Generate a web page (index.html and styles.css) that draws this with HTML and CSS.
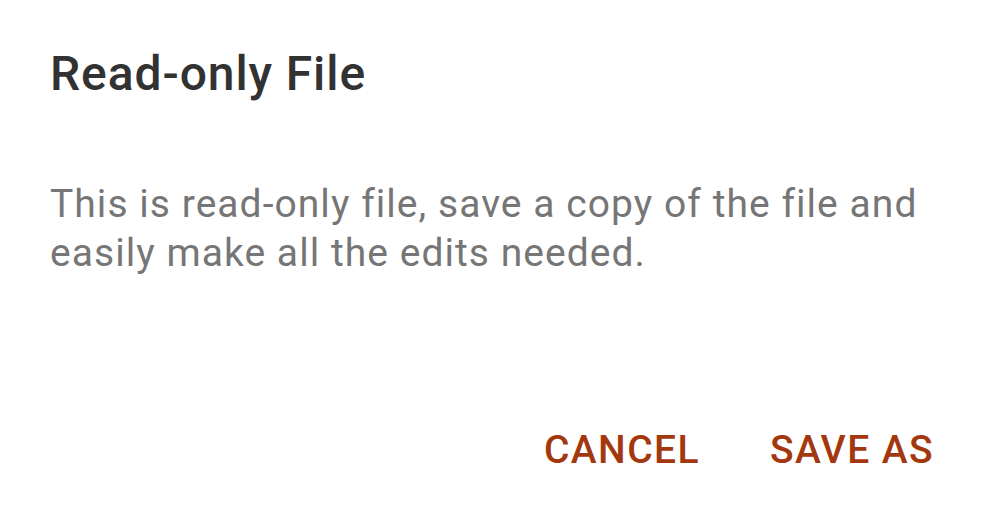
FILE: index.html
```html
<!DOCTYPE html>
<html lang="en">
<head>
    <meta charset="UTF-8">
    <meta name="viewport" content="width=device-width, initial-scale=1.0">
    <title>Read-only File</title>
    <link rel="stylesheet" href="styles.css">
</head>
<body>

    <div class="dialog">
        <h2 class="dialog-title">Read-only File</h2>
        <p class="dialog-text">This is read-only file, save a copy of the file and easily make all the edits needed.</p>
        <div class="dialog-actions">
            <button class="action">CANCEL</button>
            <button class="action">SAVE AS</button>
        </div>
    </div>

</body>
</html>
```

FILE: styles.css
```css
body {
    margin: 0;
    background: #ffffff;
    font-family: Roboto, "Noto Sans", sans-serif;
}
.dialog {
    width: 999px;
    height: 518px;
    box-sizing: border-box;
    padding: 46px 50px 0 50px;
    display: flex;
    flex-direction: column;
}
.dialog-title {
    margin: 0;
    font-size: 48px;
    font-weight: 500;
    line-height: 56px;
    letter-spacing: 0.9px;
    color: #323232;
}
.dialog-text {
    margin: 78px 0 0 0;
    font-size: 39px;
    line-height: 49px;
    letter-spacing: 1.05px;
    color: #767676;
}
.dialog-actions {
    display: flex;
    justify-content: flex-end;
    gap: 70px;
    margin-top: 148px;
    padding-right: 15px;
}
.action {
    background: none;
    border: none;
    padding: 0;
    font-family: inherit;
    font-size: 39px;
    font-weight: 500;
    line-height: 48px;
    letter-spacing: 1.4px;
    color: #a3380f;
    cursor: pointer;
}
```
